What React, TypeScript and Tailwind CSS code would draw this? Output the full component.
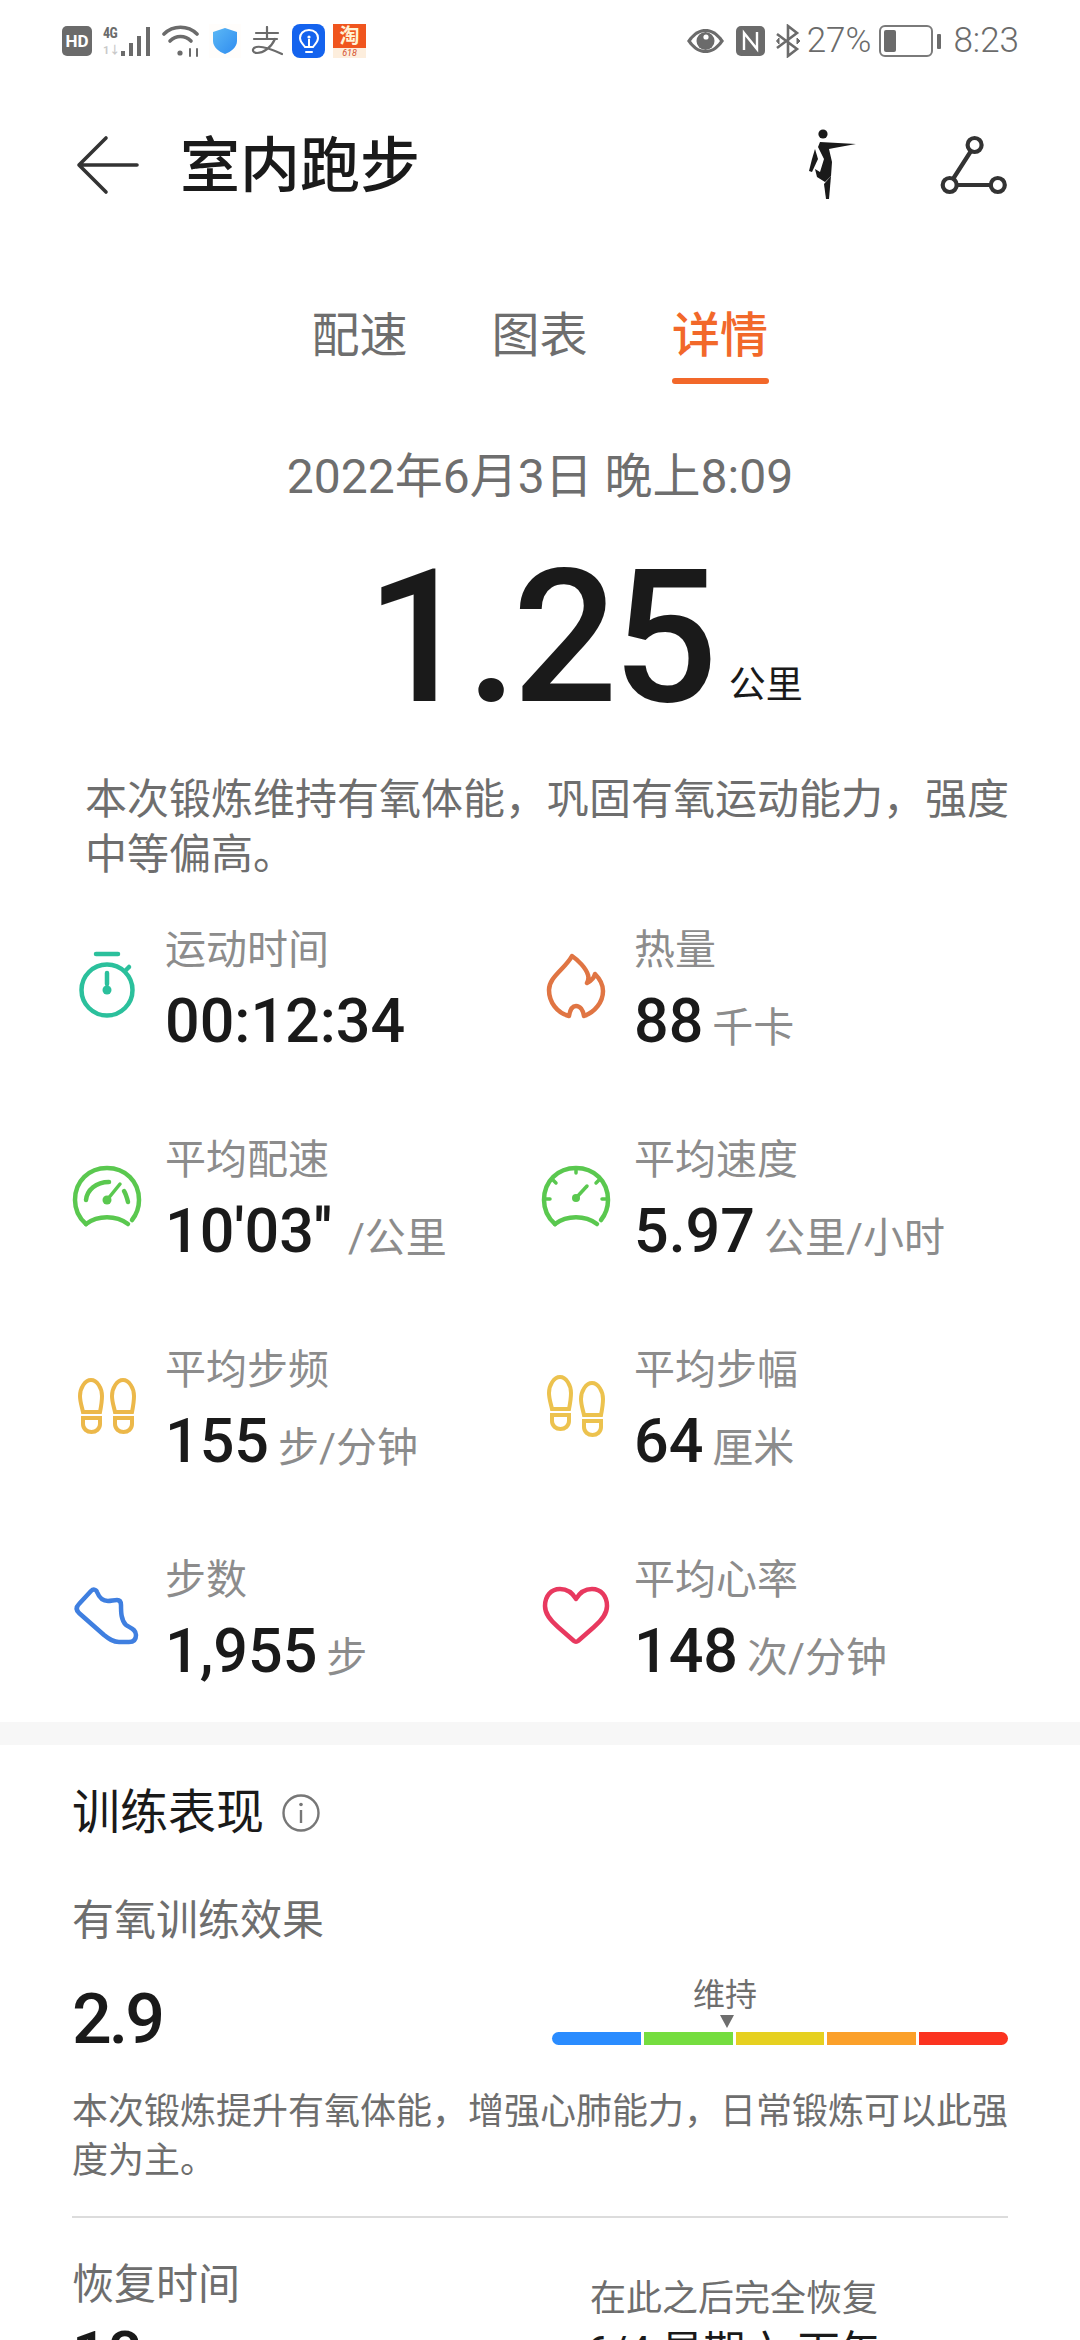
import React from "react";

// ── status bar bits ──
function SignalIcon() {
  return (
    <div className="flex items-center w-[49px] h-[31px]">
      <div className="flex flex-col justify-between h-[30px] w-[18px] text-[14px] leading-[14px] font-bold text-[#6b6b6b]">
        <span className="tracking-[-0.5px] font-['Roboto_Condensed','Roboto',sans-serif]">4G</span>
        <span className="text-[11px] leading-[11px] text-[#c9c9c9]">1↓</span>
      </div>
      <svg width="31" height="31" viewBox="0 0 31 31" fill="#6b6b6b">
        <rect x="0" y="25" width="4" height="5" />
        <rect x="8" y="17" width="4" height="13" />
        <rect x="16" y="10" width="4" height="20" />
        <rect x="25" y="1" width="4" height="29" />
      </svg>
    </div>
  );
}

function WifiIcon() {
  return (
    <svg width="38" height="32" viewBox="0 0 38 32" fill="none" stroke="#6b6b6b" strokeWidth="3.6" strokeLinecap="round">
      <path d="M2 9 C 11 0 26 0 35 9" />
      <path d="M8 16 C 14 10 23 10 29 16" />
      <circle cx="18" cy="28" r="2.6" fill="#6b6b6b" stroke="none" />
      <path d="M28 24 L 28 31 M35 24 L 35 31" strokeWidth="2" />
    </svg>
  );
}

function ShieldIcon() {
  return (
    <div className="w-[32px] h-[34px] flex items-center justify-center bg-[#fffdfb]">
      <svg width="24" height="26" viewBox="0 0 24 26">
        <defs>
          <linearGradient id="sh" x1="0" y1="0" x2="1" y2="1">
            <stop offset="0" stopColor="#5cb8f5" />
            <stop offset="1" stopColor="#2f8cf0" />
          </linearGradient>
        </defs>
        <path d="M12 0 L 24 4 L 24 13 C 24 19 18 24 12 26 C 6 24 0 19 0 13 L 0 4 Z" fill="url(#sh)" />
      </svg>
    </div>
  );
}

// drawn rather than typed: the mark has a long looping tail
function AlipayMark() {
  return (
    <svg width="32" height="30" viewBox="0 0 32 30" fill="none" stroke="#6b6b6b" strokeWidth="2.2" strokeLinecap="round">
      <path d="M5 7 L 27 7 M16 1 L 16 13 M3 13 L 26 13" />
      <path d="M24 13 C 20 22 12 27 6 27 C 2 27 1 24 3 22 C 7 19 18 22 31 28" />
    </svg>
  );
}

function BulbIcon() {
  return (
    <div className="w-[33px] h-[34px] rounded-[8px] bg-[#1463ee] flex items-center justify-center">
      <svg width="22" height="26" viewBox="0 0 22 26" fill="none" stroke="#fff" strokeWidth="2">
        <path d="M11 2 C 5 2 2 6 2 10 C 2 14 5 16 7 19 L 15 19 C 17 16 20 14 20 10 C 20 6 17 2 11 2 Z" />
        <path d="M8 24 L 14 24" strokeLinecap="round" />
        <path d="M11 19 L 11 11" />
        <circle cx="11" cy="9" r="1.6" fill="#fff" stroke="none" />
      </svg>
    </div>
  );
}

function TaoIcon() {
  return (
    <div className="w-[33px] h-[34px] bg-[#f0551e] flex flex-col items-center overflow-hidden">
      <span className="text-[20px] leading-[24px] font-bold text-[#fff3d6]">淘</span>
      <span className="w-full text-center text-[9px] leading-[10px] italic text-[#d4502d] bg-[#fdeedd]">618</span>
    </div>
  );
}

function EyeIcon() {
  return (
    <svg width="39" height="26" viewBox="0 0 39 26">
      <path d="M1 13 C 8 3 14 1 19.5 1 C 25 1 31 3 38 13 C 31 23 25 25 19.5 25 C 14 25 8 23 1 13 Z" fill="#6b6b6b" />
      <path d="M5 13 C 10 6 15 4 19.5 4 C 24 4 29 6 34 13 C 29 20 24 22 19.5 22 C 15 22 10 20 5 13 Z" fill="#fff" />
      <circle cx="19.5" cy="13" r="9" fill="#6b6b6b" />
      <circle cx="20" cy="9" r="2.6" fill="#fff" />
    </svg>
  );
}

function NfcIcon() {
  return (
    <svg width="29" height="30" viewBox="0 0 29 30">
      <rect x="0" y="0" width="29" height="30" rx="5" fill="#6b6b6b" />
      <path d="M8 24 L 8 7 L 21 23 L 21 6" fill="none" stroke="#fff" strokeWidth="2.4" />
    </svg>
  );
}

function BluetoothIcon() {
  return (
    <svg width="25" height="34" viewBox="0 0 25 34" fill="none" stroke="#6b6b6b" strokeWidth="2.6">
      <path d="M1 10 L 21 25 L 12 32 L 12 2 L 21 9 L 1 24" />
      <path d="M21 14 L 24 17 L 21 20 Z" fill="#6b6b6b" strokeWidth="1" />
      <path d="M3 14 L 0.5 17 L 3 20 Z" fill="#6b6b6b" strokeWidth="1" />
    </svg>
  );
}

function BatteryIcon() {
  return (
    <div className="flex items-center gap-[4px]">
      <div className="w-[54px] h-[32px] rounded-[6px] border-[2.5px] border-[#7a7a7a] p-[3px]">
        <div className="w-[12px] h-full rounded-[2px] bg-[#6b6b6b]" />
      </div>
      <div className="w-[4px] h-[15px] rounded-[1px] bg-[#6b6b6b]" />
    </div>
  );
}

// ── stat icons, all on the same 96 box ──
function TimerIcon() {
  return (
    <svg width="96" height="96" viewBox="0 0 96 96" fill="none" stroke="#2bc09c" strokeWidth="4.5" strokeLinecap="round">
      <path d="M37 16 L 59 16" />
      <circle cx="48" cy="52" r="25.5" />
      <path d="M66 33 L 70 29" />
      <path d="M48 35 L 48 46" />
      <circle cx="48" cy="52" r="4.5" fill="#2bc09c" stroke="none" />
    </svg>
  );
}

function FlameIcon() {
  return (
    <svg width="96" height="96" viewBox="0 0 96 96" fill="none" stroke="#e07543" strokeWidth="4.5" strokeLinejoin="round">
      <path d="M44 18 C 50 22 58 30 60 37 C 61 40 60 43 59 45 C 63 43 66 40 67 36 C 71 40 75 46 75 53 C 75 64 67 74 56 78 C 55 72 52 68 48 68 C 44 68 42 72 41 78 C 29 75 21 64 21 52 C 21 39 37 31 44 18 Z" />
    </svg>
  );
}

function PaceIcon() {
  return (
    <svg width="96" height="96" viewBox="0 0 96 96" fill="none" stroke="#5ac84f" strokeWidth="4.5" strokeLinecap="round">
      <path d="M27 76 C 20 70 16 62 16 52 C 16 33 30 20 48 20 C 66 20 80 33 80 52 C 80 60 77 67 73 72" />
      <path d="M27 76 C 39 67 57 67 69 76" />
      <path d="M27 52 C 28 42 37 34 50 34" />
      <path d="M65 43 C 67 46 68 50 69 54" />
      <path d="M48 52 L 61 36" strokeWidth="3.5" />
      <circle cx="48" cy="52" r="4.5" fill="#5ac84f" stroke="none" />
    </svg>
  );
}

function SpeedIcon() {
  return (
    <svg width="96" height="96" viewBox="0 0 96 96" fill="none" stroke="#5ac84f" strokeWidth="4.5" strokeLinecap="round">
      <path d="M27 76 C 20 70 16 62 16 52 C 16 33 30 20 48 20 C 66 20 80 33 80 52 C 80 60 77 67 73 72" />
      <path d="M27 76 C 39 67 57 67 69 76" />
      <path d="M48 21 L 48 25 M25 32 L 28 35 M71 32 L 68 35 M17 51 L 22 51 M79 51 L 74 51" strokeWidth="3.5" />
      <path d="M48 50 L 59 38" strokeWidth="3.5" />
      <circle cx="48" cy="50" r="4" fill="#5ac84f" stroke="none" />
    </svg>
  );
}

function FeetIcon({ color, stagger }: { color: string; stagger: number }) {
  return (
    <svg width="96" height="96" viewBox="0 0 96 96" fill="none" stroke={color} strokeWidth="4">
      <g transform={`translate(0 ${-stagger})`}>
        <path d="M32 22 C 38 22 43 30 43 38 C 43 44 42 49 41 54 L 24 54 C 23 49 21 44 21 38 C 21 30 26 22 32 22 Z" />
        <path d="M24 60 L 41 60 L 41 66 C 41 71 37 74 32.5 74 C 28 74 24 71 24 66 Z" />
      </g>
      <g transform={`translate(32 ${stagger})`}>
        <path d="M32 22 C 38 22 43 30 43 38 C 43 44 42 49 41 54 L 24 54 C 23 49 21 44 21 38 C 21 30 26 22 32 22 Z" />
        <path d="M24 60 L 41 60 L 41 66 C 41 71 37 74 32.5 74 C 28 74 24 71 24 66 Z" />
      </g>
    </svg>
  );
}

function ShoeIcon() {
  return (
    <svg width="96" height="96" viewBox="0 0 96 96" fill="none" stroke="#3f7fe0" strokeWidth="4.5" strokeLinejoin="round">
      <path d="M32 23 C 34 21 37 21 38 24 C 40 29 44 33 49 33 C 52 33 55 32 58 32 C 61 32 62 34 62 37 C 62 44 62 52 67 57 C 71 60 77 61 77 67 C 77 72 74 74 70 74 L 60 74 C 54 74 50 71 45 67 L 20 45 C 17 42 17 39 20 36 Z" />
    </svg>
  );
}

function HeartIcon() {
  return (
    <svg width="96" height="96" viewBox="0 0 96 96" fill="none" stroke="#e8395f" strokeWidth="4.5" strokeLinejoin="round">
      <path d="M48 31 C 44 24 38 21 32 21 C 23 21 17 28 17 38 C 17 46 22 52 30 59 L 46 73 C 47 74 49 74 50 73 L 66 59 C 74 52 79 46 79 38 C 79 28 73 21 64 21 C 58 21 52 24 48 31 Z" />
    </svg>
  );
}

function Stat({ icon, label, value, unit, unitGap = "ml-[9px]" }: { icon: React.ReactNode; label: string; value: string; unit?: string; unitGap?: string }) {
  return (
    <div className="flex items-center h-[140px]">
      <div className="w-[106px] flex-shrink-0 pb-[8px]">{icon}</div>
      <div>
        <div className="text-[41px] leading-[50px] text-[#8c8c8c]">{label}</div>
        <div className="mt-[11px] flex items-baseline h-[70px] leading-[70px]">
          <span className="text-[61px] font-medium text-[#1a1a1a]">{value}</span>
          {unit && <span className={`${unitGap} text-[41px] text-[#8c8c8c]`}>{unit}</span>}
        </div>
      </div>
    </div>
  );
}

const segments = ["bg-[#2a8cff] rounded-l-full", "bg-[#75dd3f]", "bg-[#e6d020]", "bg-[#fba02a]", "bg-[#fb3320] rounded-r-full"];

export default function App() {
  return (
    <div className="w-[1080px] h-[2340px] overflow-hidden bg-white font-['Roboto','Noto_Sans_CJK_SC',sans-serif]">
      {/* Status bar */}
      <div className="h-[82px] flex items-center justify-between pl-[62px] pr-[61px]">
        <div className="flex items-center">
          <div className="w-[30px] h-[30px] rounded-[5px] bg-[#6b6b6b] text-white text-[17px] leading-[30px] font-bold text-center">HD</div>
          <div className="ml-[11px]"><SignalIcon /></div>
          <div className="ml-[10px]"><WifiIcon /></div>
          <div className="ml-[9px]"><ShieldIcon /></div>
          <div className="ml-[10px]"><AlipayMark /></div>
          <div className="ml-[9px]"><BulbIcon /></div>
          <div className="ml-[8px]"><TaoIcon /></div>
        </div>
        <div className="flex items-center text-[35px] font-light text-[#6b6b6b]">
          <EyeIcon />
          <div className="ml-[11px]"><NfcIcon /></div>
          <div className="ml-[11px]"><BluetoothIcon /></div>
          <span className="ml-[6px]">27%</span>
          <div className="ml-[8px]"><BatteryIcon /></div>
          <span className="ml-[12px]">8:23</span>
        </div>
      </div>

      {/* Header */}
      <div className="h-[166px] flex items-center pl-[76px] pr-[70px]">
        <svg width="64" height="60" viewBox="0 0 64 60" fill="none" stroke="#333" strokeWidth="3.6" strokeLinecap="round" strokeLinejoin="round">
          <path d="M30 3 L 3 30 L 30 57 M3 30 L 61 30" />
        </svg>
        <h1 className="ml-[40px] mt-[4px] text-[60px] leading-[70px] font-medium text-[#1a1a1a]">室内跑步</h1>
        <div className="flex-1" />
        <svg width="70" height="76" viewBox="0 0 70 76" fill="#1a1a1a">
          <circle cx="23" cy="7" r="4.6" />
          <path d="M20 15 L 56 17 L 34 21 L 29 22 L 32 35 L 31 49 L 25 55 L 17 50 L 15 42 L 20 45 L 24 32 L 18 20 Z" />
          <path d="M15 22 L 18 32 L 12 45 L 9 44 L 12 32 Z" />
          <path d="M31 49 L 29 72 L 26 72 L 24 57 Z" />
        </svg>
        <svg className="ml-[65px]" width="75" height="72" viewBox="0 0 75 72" fill="none" stroke="#333" strokeWidth="4.2">
          <circle cx="39.6" cy="16" r="7" />
          <circle cx="14.7" cy="56" r="7" />
          <circle cx="62.8" cy="56" r="7" />
          <path d="M36 22 L 18 50 M22 56 L 55.5 56" />
        </svg>
      </div>

      {/* Tabs */}
      <div className="mt-[56px] flex justify-center gap-[84px] text-[48px] leading-[64px]">
        <span className="text-[#6e6e6e]">配速</span>
        <span className="text-[#6e6e6e]">图表</span>
        <div className="flex flex-col items-center">
          <span className="font-medium text-[#f2682a]">详情</span>
          <div className="mt-[10px] w-[97px] h-[6px] rounded-full bg-[#f2682a]" />
        </div>
      </div>

      {/* Distance */}
      <div className="mt-[68px] text-center text-[48px] leading-[50px] text-[#6e6e6e]">2022年6月3日 晚上8:09</div>
      <div className="mt-[43px] pl-[366px] flex items-baseline h-[185px] text-[#1a1a1a]">
        <span className="text-[185px] leading-[185px] font-medium tracking-[-5px]">1.25</span>
        <span className="ml-[16px] text-[37px] leading-[36px] -translate-y-[3px]">公里</span>
      </div>

      <p className="mt-[42px] pl-[85px] pr-[60px] text-[42px] leading-[55px] text-[#6e6e6e]">本次锻炼维持有氧体能，巩固有氧运动能力，强度中等偏高。</p>

      {/* Stats */}
      <div className="mt-[38px] pl-[59px] grid grid-cols-[469px_1fr] gap-y-[70px]">
        <Stat icon={<TimerIcon />} label="运动时间" value="00:12:34" />
        <Stat icon={<FlameIcon />} label="热量" value="88" unit="千卡" />
        <Stat icon={<PaceIcon />} label="平均配速" value={"10'03''"} unit="/公里" unitGap="ml-[16px]" />
        <Stat icon={<SpeedIcon />} label="平均速度" value="5.97" unit="公里/小时" />
        <Stat icon={<FeetIcon color="#ecb84a" stagger={0} />} label="平均步频" value="155" unit="步/分钟" />
        <Stat icon={<FeetIcon color="#ecc24e" stagger={3} />} label="平均步幅" value="64" unit="厘米" />
        <Stat icon={<ShoeIcon />} label="步数" value="1,955" unit="步" />
        <Stat icon={<HeartIcon />} label="平均心率" value="148" unit="次/分钟" />
      </div>

      <div className="mt-[32px] h-[23px] bg-[#f7f7f7]" />

      {/* Training performance */}
      <div className="px-[72px]">
        <div className="mt-[38px] flex items-center">
          <h2 className="text-[48px] leading-[60px] text-[#1a1a1a]">训练表现</h2>
          <svg className="ml-[18px]" width="38" height="38" viewBox="0 0 38 38" fill="none" stroke="#777" strokeWidth="2.4">
            <circle cx="19" cy="19" r="17.5" />
            <path d="M19 16 L 19 29" />
            <circle cx="19" cy="10.5" r="1.8" fill="#777" stroke="none" />
          </svg>
        </div>
        <div className="mt-[53px] text-[42px] leading-[50px] text-[#6e6e6e]">有氧训练效果</div>

        <div className="mt-[29px] flex items-start">
          <div className="mt-[9px] text-[70px] leading-[70px] font-medium tracking-[-3px] text-[#1a1a1a]">2.9</div>
          <div className="ml-auto w-[456px]">
            <div className="pl-[141px] text-[32px] leading-[40px] text-[#6e6e6e]">维持</div>
            <svg className="ml-[168px]" width="14" height="13" viewBox="0 0 14 13" fill="#6e6e6e">
              <path d="M0 0 L 14 0 L 7 13 Z" />
            </svg>
            <div className="mt-[4px] flex gap-[3px] h-[13px]">
              {segments.map((c) => (
                <div key={c} className={`flex-1 ${c}`} />
              ))}
            </div>
          </div>
        </div>

        <p className="mt-[34px] text-[36px] leading-[49px] text-[#6e6e6e]">本次锻炼提升有氧体能，增强心肺能力，日常锻炼可以此强度为主。</p>
        <div className="mt-[30px] h-[2px] bg-[#dcdcdc]" />

        {/* Recovery */}
        <div className="mt-[42px] flex items-start">
          <div>
            <div className="text-[42px] leading-[50px] text-[#6e6e6e]">恢复时间</div>
            <div className="mt-[9px] text-[62px] leading-[70px] font-medium text-[#1a1a1a]">18</div>
          </div>
          <div className="ml-[314px] w-[360px] text-center">
            <div className="mt-[17px] text-[36px] leading-[44px] text-[#6e6e6e]">在此之后完全恢复</div>
            <div className="mt-[6px] text-[42px] leading-[50px] text-[#1a1a1a]">6/4 星期六 下午2:21</div>
          </div>
        </div>
      </div>
    </div>
  );
}
